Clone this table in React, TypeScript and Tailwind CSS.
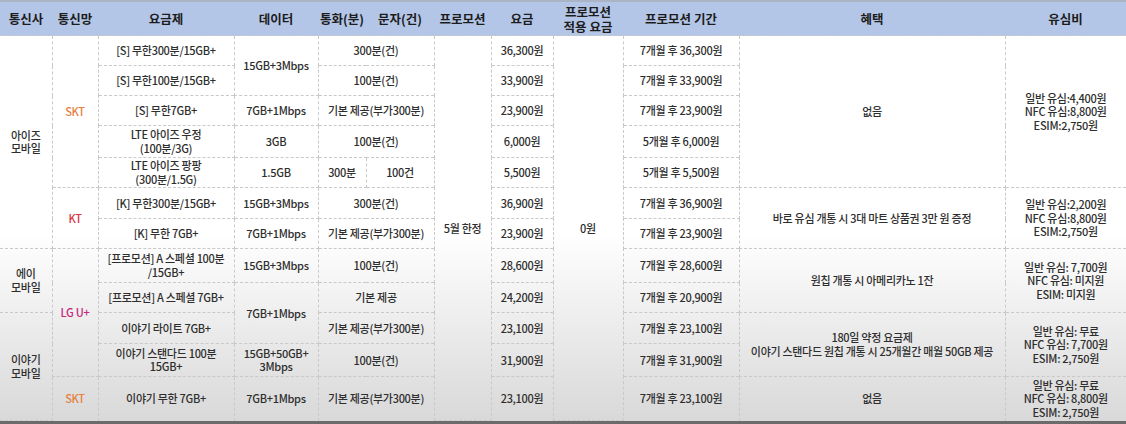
import React from "react";

const cell = "border border-dashed border-[#c9c9c9] text-center align-middle p-0";

function Td({
  children,
  rowSpan,
  colSpan,
  className = "",
}: {
  children?: React.ReactNode;
  rowSpan?: number;
  colSpan?: number;
  className?: string;
}) {
  return (
    <td rowSpan={rowSpan} colSpan={colSpan} className={`${cell} ${className}`}>
      {children}
    </td>
  );
}

const skt = "text-[#e5803f]";
const kt = "text-[#d8383f]";
const lgu = "text-[#c4287c]";

export default function App() {
  return (
    <div className="w-[1126px] h-[424px] flex flex-col bg-linear-to-b from-white from-55% to-[#d8d8d8] font-['Noto_Sans_CJK_KR',sans-serif] text-[#2e2e2e] overflow-hidden">
      <div className="h-[2px] bg-[#a9b4c4]" />
      <table className="w-full table-fixed border-collapse text-[11px] leading-[13.5px] tracking-[-0.3px] font-medium">
        <colgroup>
          <col className="w-[52px]" />
          <col className="w-[46px]" />
          <col className="w-[136px]" />
          <col className="w-[84px]" />
          <col className="w-[48px]" />
          <col className="w-[68px]" />
          <col className="w-[57px]" />
          <col className="w-[62px]" />
          <col className="w-[70px]" />
          <col className="w-[116px]" />
          <col className="w-[266px]" />
          <col className="w-[121px]" />
        </colgroup>
        <thead>
          <tr className="h-[34px] bg-[#b4c6e7] text-[12.5px] font-bold text-[#1c1c1c] leading-[15px] tracking-normal">
            <th className="border-b border-dashed border-[#c9c9c9] font-bold">통신사</th>
            <th className="border-b border-dashed border-[#c9c9c9] font-bold">통신망</th>
            <th className="border-b border-dashed border-[#c9c9c9] font-bold">요금제</th>
            <th className="border-b border-dashed border-[#c9c9c9] font-bold">데이터</th>
            <th className="border-b border-dashed border-[#c9c9c9] font-bold">통화(분)</th>
            <th className="border-b border-dashed border-[#c9c9c9] font-bold">문자(건)</th>
            <th className="border-b border-dashed border-[#c9c9c9] font-bold">프로모션</th>
            <th className="border-b border-dashed border-[#c9c9c9] font-bold">요금</th>
            <th className="border-b border-dashed border-[#c9c9c9] font-bold">
              프로모션
              <br />
              적용 요금
            </th>
            <th className="border-b border-dashed border-[#c9c9c9] font-bold">프로모션 기간</th>
            <th className="border-b border-dashed border-[#c9c9c9] font-bold">혜택</th>
            <th className="border-b border-dashed border-[#c9c9c9] font-bold">유심비</th>
          </tr>
        </thead>
        <tbody>
          <tr className="h-[30px]">
            <Td rowSpan={7} className="border-l-0">
              아이즈
              <br />
              모바일
            </Td>
            <Td rowSpan={5} className={skt}>SKT</Td>
            <Td>[S] 무한300분/15GB+</Td>
            <Td rowSpan={2}>15GB+3Mbps</Td>
            <Td colSpan={2}>300분(건)</Td>
            <Td rowSpan={12}>5월 한정</Td>
            <Td>36,300원</Td>
            <Td rowSpan={12}>0원</Td>
            <Td>7개월 후 36,300원</Td>
            <Td rowSpan={5}>없음</Td>
            <Td rowSpan={5} className="border-r-0">
              일반 유심:4,400원
              <br />
              NFC 유심:8,800원
              <br />
              ESIM:2,750원
            </Td>
          </tr>
          <tr className="h-[30px]">
            <Td>[S] 무한100분/15GB+</Td>
            <Td colSpan={2}>100분(건)</Td>
            <Td>33,900원</Td>
            <Td>7개월 후 33,900원</Td>
          </tr>
          <tr className="h-[30px]">
            <Td>[S] 무한7GB+</Td>
            <Td>7GB+1Mbps</Td>
            <Td colSpan={2}>기본 제공(부가300분)</Td>
            <Td>23,900원</Td>
            <Td>7개월 후 23,900원</Td>
          </tr>
          <tr className="h-[32px]">
            <Td>
              LTE 아이즈 우정
              <br />
              (100분/3G)
            </Td>
            <Td>3GB</Td>
            <Td colSpan={2}>100분(건)</Td>
            <Td>6,000원</Td>
            <Td>5개월 후 6,000원</Td>
          </tr>
          <tr className="h-[30px]">
            <Td>
              LTE 아이즈 팡팡
              <br />
              (300분/1.5G)
            </Td>
            <Td>1.5GB</Td>
            <Td>300분</Td>
            <Td>100건</Td>
            <Td>5,500원</Td>
            <Td>5개월 후 5,500원</Td>
          </tr>
          <tr className="h-[31px]">
            <Td rowSpan={2} className={kt}>KT</Td>
            <Td>[K] 무한300분/15GB+</Td>
            <Td>15GB+3Mbps</Td>
            <Td colSpan={2}>300분(건)</Td>
            <Td>36,900원</Td>
            <Td>7개월 후 36,900원</Td>
            <Td rowSpan={2}>바로 유심 개통 시 3대 마트 상품권 3만 원 증정</Td>
            <Td rowSpan={2} className="border-r-0">
              일반 유심:2,200원
              <br />
              NFC 유심:8,800원
              <br />
              ESIM:2,750원
            </Td>
          </tr>
          <tr className="h-[30px]">
            <Td>[K] 무한 7GB+</Td>
            <Td>7GB+1Mbps</Td>
            <Td colSpan={2}>기본 제공(부가300분)</Td>
            <Td>23,900원</Td>
            <Td>7개월 후 23,900원</Td>
          </tr>
          <tr className="h-[34px]">
            <Td rowSpan={2} className="border-l-0">
              에이
              <br />
              모바일
            </Td>
            <Td rowSpan={4} className={lgu}>LG U+</Td>
            <Td>
              [프로모션] A 스페셜 100분
              <br />
              /15GB+
            </Td>
            <Td>15GB+3Mbps</Td>
            <Td colSpan={2}>100분(건)</Td>
            <Td>28,600원</Td>
            <Td>7개월 후 28,600원</Td>
            <Td rowSpan={2}>원칩 개통 시 아메리카노 1잔</Td>
            <Td rowSpan={2} className="border-r-0">
              일반 유심: 7,700원
              <br />
              NFC 유심: 미지원
              <br />
              ESIM: 미지원
            </Td>
          </tr>
          <tr className="h-[30px]">
            <Td>[프로모션] A 스페셜 7GB+</Td>
            <Td rowSpan={2}>7GB+1Mbps</Td>
            <Td colSpan={2}>기본 제공</Td>
            <Td>24,200원</Td>
            <Td>7개월 후 20,900원</Td>
          </tr>
          <tr className="h-[31px]">
            <Td rowSpan={3} className="border-l-0">
              이야기
              <br />
              모바일
            </Td>
            <Td>이야기 라이트 7GB+</Td>
            <Td colSpan={2}>기본 제공(부가300분)</Td>
            <Td>23,100원</Td>
            <Td>7개월 후 23,100원</Td>
            <Td rowSpan={2}>
              180일 약정 요금제
              <br />
              이야기 스탠다드 원칩 개통 시 25개월간 매월 50GB 제공
            </Td>
            <Td rowSpan={2} className="border-r-0">
              일반 유심: 무료
              <br />
              NFC 유심: 7,700원
              <br />
              ESIM: 2,750원
            </Td>
          </tr>
          <tr className="h-[33px]">
            <Td>
              이야기 스탠다드 100분
              <br />
              15GB+
            </Td>
            <Td>
              15GB+50GB+
              <br />
              3Mbps
            </Td>
            <Td colSpan={2}>100분(건)</Td>
            <Td>31,900원</Td>
            <Td>7개월 후 31,900원</Td>
          </tr>
          <tr className="h-[44px]">
            <Td className={`${skt} border-b-0`}>SKT</Td>
            <Td className="border-b-0">이야기 무한 7GB+</Td>
            <Td className="border-b-0">7GB+1Mbps</Td>
            <Td colSpan={2} className="border-b-0">기본 제공(부가300분)</Td>
            <Td className="border-b-0">23,100원</Td>
            <Td className="border-b-0">7개월 후 23,100원</Td>
            <Td className="border-b-0">없음</Td>
            <Td className="border-r-0 border-b-0">
              일반 유심: 무료
              <br />
              NFC 유심: 8,800원
              <br />
              ESIM: 2,750원
            </Td>
          </tr>
        </tbody>
      </table>
      <div className="flex-1" />
      <div className="h-[3px] bg-[#6b6b6b]" />
    </div>
  );
}
